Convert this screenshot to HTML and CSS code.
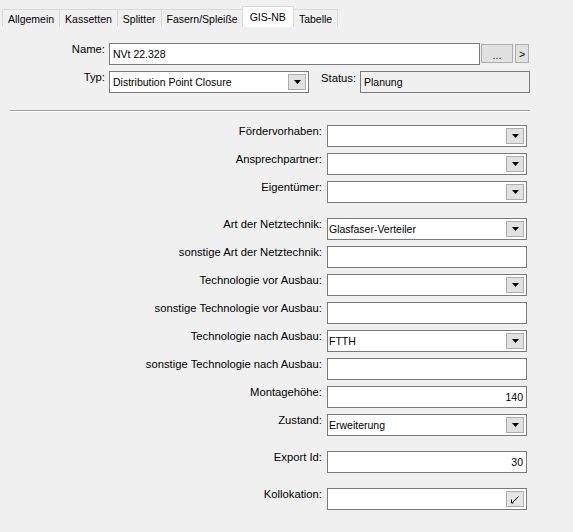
FILE: index.html
```html
<!DOCTYPE html>
<html lang="de">
<head>
    <meta charset="UTF-8">
    <title>GIS-NB</title>
    <link rel="stylesheet" href="styles.css">
</head>
<body>
    <div class="tabs">
        <div class="tab">Allgemein</div>
        <div class="tab">Kassetten</div>
        <div class="tab">Splitter</div>
        <div class="tab">Fasern/Spleiße</div>
        <div class="tab active">GIS-NB</div>
        <div class="tab">Tabelle</div>
    </div>
    <div class="page">
        <div class="head">
            <div class="head-row">
                <label class="head-label">Name:</label>
                <div class="field name-field">NVt 22.328</div>
                <button class="btn dots">...</button>
                <button class="btn next">&gt;</button>
            </div>
            <div class="head-row">
                <label class="head-label">Typ:</label>
                <div class="field combo typ-field">
                    <span class="value">Distribution Point Closure</span>
                    <span class="drop"><svg width="7" height="4" viewBox="0 0 7 4"><path d="M0 0H7L3.5 4Z" fill="#000"/></svg></span>
                </div>
                <label class="status-label">Status:</label>
                <div class="field readonly status-field">Planung</div>
            </div>
        </div>
        <div class="sep"></div>
        <div class="form">
            <div class="group">
                <div class="form-row">
                    <label class="form-label">Fördervorhaben:</label>
                    <div class="field combo"><span class="value"></span><span class="drop"><svg width="7" height="4" viewBox="0 0 7 4"><path d="M0 0H7L3.5 4Z" fill="#000"/></svg></span></div>
                </div>
                <div class="form-row">
                    <label class="form-label">Ansprechpartner:</label>
                    <div class="field combo"><span class="value"></span><span class="drop"><svg width="7" height="4" viewBox="0 0 7 4"><path d="M0 0H7L3.5 4Z" fill="#000"/></svg></span></div>
                </div>
                <div class="form-row">
                    <label class="form-label">Eigentümer:</label>
                    <div class="field combo"><span class="value"></span><span class="drop"><svg width="7" height="4" viewBox="0 0 7 4"><path d="M0 0H7L3.5 4Z" fill="#000"/></svg></span></div>
                </div>
            </div>
            <div class="group">
                <div class="form-row">
                    <label class="form-label">Art der Netztechnik:</label>
                    <div class="field combo"><span class="value">Glasfaser-Verteiler</span><span class="drop"><svg width="7" height="4" viewBox="0 0 7 4"><path d="M0 0H7L3.5 4Z" fill="#000"/></svg></span></div>
                </div>
                <div class="form-row">
                    <label class="form-label">sonstige Art der Netztechnik:</label>
                    <div class="field"></div>
                </div>
                <div class="form-row">
                    <label class="form-label">Technologie vor Ausbau:</label>
                    <div class="field combo"><span class="value"></span><span class="drop"><svg width="7" height="4" viewBox="0 0 7 4"><path d="M0 0H7L3.5 4Z" fill="#000"/></svg></span></div>
                </div>
                <div class="form-row">
                    <label class="form-label">sonstige Technologie vor Ausbau:</label>
                    <div class="field"></div>
                </div>
                <div class="form-row">
                    <label class="form-label">Technologie nach Ausbau:</label>
                    <div class="field combo"><span class="value">FTTH</span><span class="drop"><svg width="7" height="4" viewBox="0 0 7 4"><path d="M0 0H7L3.5 4Z" fill="#000"/></svg></span></div>
                </div>
                <div class="form-row">
                    <label class="form-label">sonstige Technologie nach Ausbau:</label>
                    <div class="field"></div>
                </div>
                <div class="form-row">
                    <label class="form-label">Montagehöhe:</label>
                    <div class="field number">140</div>
                </div>
                <div class="form-row">
                    <label class="form-label">Zustand:</label>
                    <div class="field combo"><span class="value">Erweiterung</span><span class="drop"><svg width="7" height="4" viewBox="0 0 7 4"><path d="M0 0H7L3.5 4Z" fill="#000"/></svg></span></div>
                </div>
            </div>
            <div class="group">
                <div class="form-row">
                    <label class="form-label">Export Id:</label>
                    <div class="field number">30</div>
                </div>
            </div>
            <div class="group">
                <div class="form-row">
                    <label class="form-label">Kollokation:</label>
                    <div class="field combo"><span class="value"></span><span class="drop check"><svg width="10" height="9" viewBox="0 0 10 9"><path d="M1.5 4.5V8H3.5M2.5 7.5L8.5 1.5" stroke="#000" stroke-width="1" fill="none"/></svg></span></div>
                </div>
            </div>
        </div>
    </div>
</body>
</html>
```

FILE: styles.css
```css
body {
    font-family: 'Liberation Sans', Arial, sans-serif;
    background-color: #f0f0f0;
    color: #000;
    margin: 0;
    width: 573px;
    height: 532px;
    overflow: hidden;
}
.tabs {
    display: flex;
    align-items: flex-end;
    height: 27px;
    padding-left: 2px;
    box-sizing: border-box;
}
.tab {
    height: 18px;
    box-sizing: border-box;
    padding: 3px 5px 0 5px;
    border: 1px solid #d9d9d9;
    border-bottom: none;
    margin-right: -1px;
    font-size: 10.5px;
    line-height: 12px;
    background-color: #f0f0f0;
}
.tab.active {
    height: 21px;
    padding: 4px 7px 0 7px;
    margin: 0 -1px 0 -1px;
    background-color: #fff;
    position: relative;
}
.page {
    padding-top: 16px;
}
.head {
    display: flex;
    flex-direction: column;
    gap: 6px;
}
.head-row {
    display: flex;
    height: 22px;
}
.head-label {
    width: 105px;
    margin-right: 4px;
    text-align: right;
    font-size: 11.25px;
    line-height: 13px;
}
.field {
    height: 22px;
    width: 200px;
    box-sizing: border-box;
    border: 1px solid #7a7a7a;
    background-color: #fff;
    display: flex;
    align-items: center;
    padding: 0 2px 0 1px;
    font-size: 10.5px;
}
.head .field {
    padding-left: 3px;
}
.name-field {
    width: 371px;
    margin-right: 1px;
}
.btn {
    height: 19px;
    margin-top: 1px;
    box-sizing: border-box;
    border: 1px solid #adadad;
    background-color: #e1e1e1;
    font-family: inherit;
    font-size: 10.5px;
    padding: 0;
    color: #000;
}
.dots {
    width: 32px;
    color: #1a1a60;
    padding-top: 3px;
}
.next {
    width: 14px;
    margin-left: 2px;
}
.combo .value {
    flex: 1;
}
.drop {
    width: 18px;
    height: 16px;
    box-sizing: border-box;
    border: 1px solid #adadad;
    background-color: #e1e1e1;
    display: flex;
    align-items: center;
    justify-content: center;
}
.status-label {
    width: 39px;
    padding-left: 12px;
    margin-top: 1px;
    font-size: 11.25px;
    line-height: 13px;
}
.readonly {
    background-color: #f0f0f0;
}
.status-field {
    width: 170px;
}
.sep {
    margin: 17px 0 0 10px;
    width: 520px;
    border-top: 1px solid #a0a0a0;
    border-bottom: 1px solid #fff;
}
.form {
    margin-top: 13px;
}
.group {
    display: flex;
    flex-direction: column;
    gap: 6px;
    margin-bottom: 15px;
}
.form-row {
    display: flex;
    height: 22px;
}
.form-label {
    width: 322px;
    margin-right: 5px;
    text-align: right;
    font-size: 11.25px;
    line-height: 13px;
}
.number {
    justify-content: flex-end;
    padding-right: 3px;
}
.check {
    background-color: #e5e5e5;
}
```
